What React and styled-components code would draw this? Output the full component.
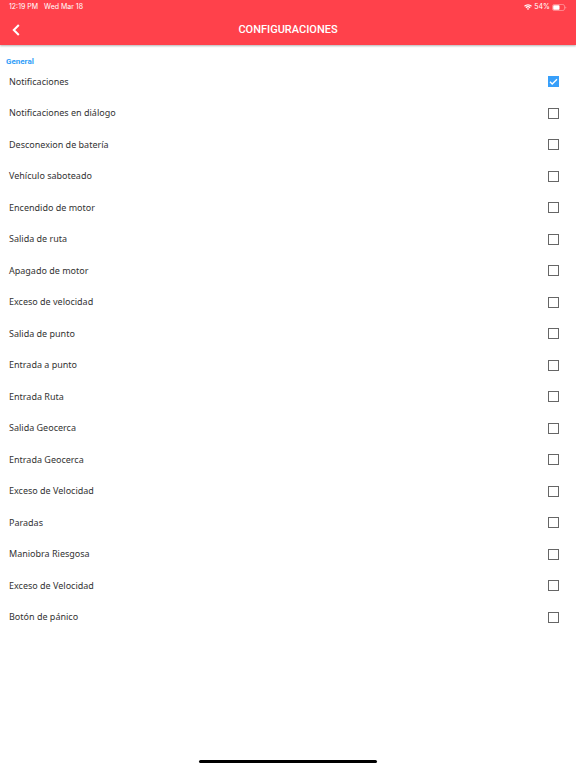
import React, { useState } from 'react'
import styled, { createGlobalStyle } from 'styled-components'

const GlobalStyle = createGlobalStyle`
  body {
    margin: 0;
    background-color: #ffffff;
    font-family: 'Noto Sans', 'Liberation Sans', sans-serif;
  }
`

const Screen = styled.div`
  min-height: 100vh;
  display: flex;
  flex-direction: column;
`

const Header = styled.header`
  background-color: #ff414b;
  color: #ffffff;
  box-shadow: 0 1px 2px rgba(0, 0, 0, 0.3);
`

const StatusBar = styled.div`
  height: 14px;
  padding: 0 9px;
  display: flex;
  align-items: center;
  justify-content: space-between;
  font-family: Inter, 'Liberation Sans', sans-serif;
  font-size: 7px;
  line-height: 14px;
`

const StatusGroup = styled.div`
  display: flex;
  align-items: center;
  gap: ${props => props.$gap}px;
`

const NavBar = styled.div`
  height: 31px;
  padding: 0 8px;
  display: grid;
  grid-template-columns: 16px 1fr 16px;
  align-items: center;
`

const BackButton = styled.button`
  width: 16px;
  height: 16px;
  padding: 0;
  border: none;
  background: none;
  color: inherit;
  display: flex;
  align-items: center;
  justify-content: center;
  cursor: pointer;
`

const Title = styled.h1`
  margin: 0;
  font-family: Roboto, 'Liberation Sans', sans-serif;
  font-size: 11px;
  font-weight: 500;
  line-height: 16px;
  text-align: center;
`

const Main = styled.main`
  flex: 1;
  display: flex;
  flex-direction: column;
  padding-top: 12px;
`

const SectionTitle = styled.h2`
  margin: 0;
  padding: 0 6px;
  color: #2f9df8;
  font-family: Roboto, 'Liberation Sans', sans-serif;
  font-size: 8px;
  font-weight: 700;
  line-height: 9px;
`

const List = styled.ul`
  flex: 1;
  margin: 0;
  padding: 0;
  list-style: none;
  display: grid;
  grid-auto-rows: 1fr;
`

const Row = styled.li`
  min-height: 28px;
  display: flex;
`

const RowLabel = styled.label`
  flex: 1;
  padding: 0 17px 0 9px;
  display: flex;
  align-items: center;
  justify-content: space-between;
  color: #333333;
  font-size: 9px;
  line-height: 12px;
  cursor: pointer;
`

const CheckWrapper = styled.span`
  display: grid;
  width: 11px;
  height: 11px;

  > * {
    grid-area: 1 / 1;
  }
`

const Checkbox = styled.input`
  appearance: none;
  box-sizing: border-box;
  width: 11px;
  height: 11px;
  margin: 0;
  border: 1px solid #666666;
  background-color: #ffffff;

  &:checked {
    border-color: #379ffa;
    background-color: #379ffa;
  }
`

const Bottom = styled.footer`
  height: 135px;
  display: flex;
  align-items: flex-end;
  justify-content: center;
`

const HomeIndicator = styled.div`
  width: 31%;
  height: 3px;
  margin-bottom: 5px;
  border-radius: 2px;
  background-color: #000000;
`

const options = [
  'Notificaciones',
  'Notificaciones en diálogo',
  'Desconexion de batería',
  'Vehículo saboteado',
  'Encendido de motor',
  'Salida de ruta',
  'Apagado de motor',
  'Exceso de velocidad',
  'Salida de punto',
  'Entrada a punto',
  'Entrada Ruta',
  'Salida Geocerca',
  'Entrada Geocerca',
  'Exceso de Velocidad',
  'Paradas',
  'Maniobra Riesgosa',
  'Exceso de Velocidad',
  'Botón de pánico'
]

const WifiIcon = () => (
  <svg width="8" height="6" viewBox="0 0 16 12" fill="none" stroke="currentColor" strokeWidth="2.4" aria-hidden="true">
    <path d="M1 4.6a10 10 0 0 1 14 0" />
    <path d="M3.8 7.4a6 6 0 0 1 8.4 0" />
    <path d="M8 12 5.6 9.6a3.4 3.4 0 0 1 4.8 0z" fill="currentColor" stroke="none" />
  </svg>
)

const BatteryIcon = () => (
  <svg width="15" height="7" viewBox="0 0 15 7" fill="none" aria-hidden="true">
    <rect x="0.5" y="0.5" width="12" height="6" rx="1.6" stroke="#ffffff" strokeOpacity="0.5" strokeWidth="0.7" />
    <rect x="1.2" y="1.2" width="6.3" height="4.6" rx="0.8" fill="#ffffff" />
    <path d="M13.4 2.4v2.2q0.9-0.3 0.9-1.1t-0.9-1.1z" fill="#ffffff" fillOpacity="0.5" />
  </svg>
)

const BackIcon = () => (
  <svg width="16" height="16" viewBox="0 0 16 16" fill="none" stroke="currentColor" strokeWidth="2" aria-hidden="true">
    <path d="M10.8 3 5.8 8l5 5" />
  </svg>
)

const CheckIcon = () => (
  <svg width="11" height="11" viewBox="0 0 11 11" fill="none" stroke="#ffffff" strokeWidth="1.3" pointerEvents="none" aria-hidden="true">
    <path d="M2 5.8 4.2 8 9 3.2" />
  </svg>
)

const OptionRow = ({ id, name, checked, onToggle }) => (
  <Row>
    <RowLabel htmlFor={id}>
      {name}
      <CheckWrapper>
        <Checkbox id={id} type="checkbox" checked={checked} onChange={onToggle} />
        {checked && <CheckIcon />}
      </CheckWrapper>
    </RowLabel>
  </Row>
)

export default function App() {
  const [selected, setSelected] = useState([0])

  const toggle = key => {
    setSelected(
      selected.includes(key) ? selected.filter(k => k !== key) : [...selected, key]
    )
  }

  return (
    <Screen>
      <GlobalStyle />
      <Header>
        <StatusBar>
          <StatusGroup $gap={6}>
            <span>12:19 PM</span>
            <span>Wed Mar 18</span>
          </StatusGroup>
          <StatusGroup $gap={2}>
            <WifiIcon />
            <span>54%</span>
            <BatteryIcon />
          </StatusGroup>
        </StatusBar>
        <NavBar>
          <BackButton type="button" aria-label="Atrás">
            <BackIcon />
          </BackButton>
          <Title>CONFIGURACIONES</Title>
        </NavBar>
      </Header>
      <Main>
        <SectionTitle>General</SectionTitle>
        <List>
          {options.map((name, key) => (
            <OptionRow
              key={key}
              id={`option-${key}`}
              name={name}
              checked={selected.includes(key)}
              onToggle={() => toggle(key)}
            />
          ))}
        </List>
      </Main>
      <Bottom>
        <HomeIndicator />
      </Bottom>
    </Screen>
  )
}
